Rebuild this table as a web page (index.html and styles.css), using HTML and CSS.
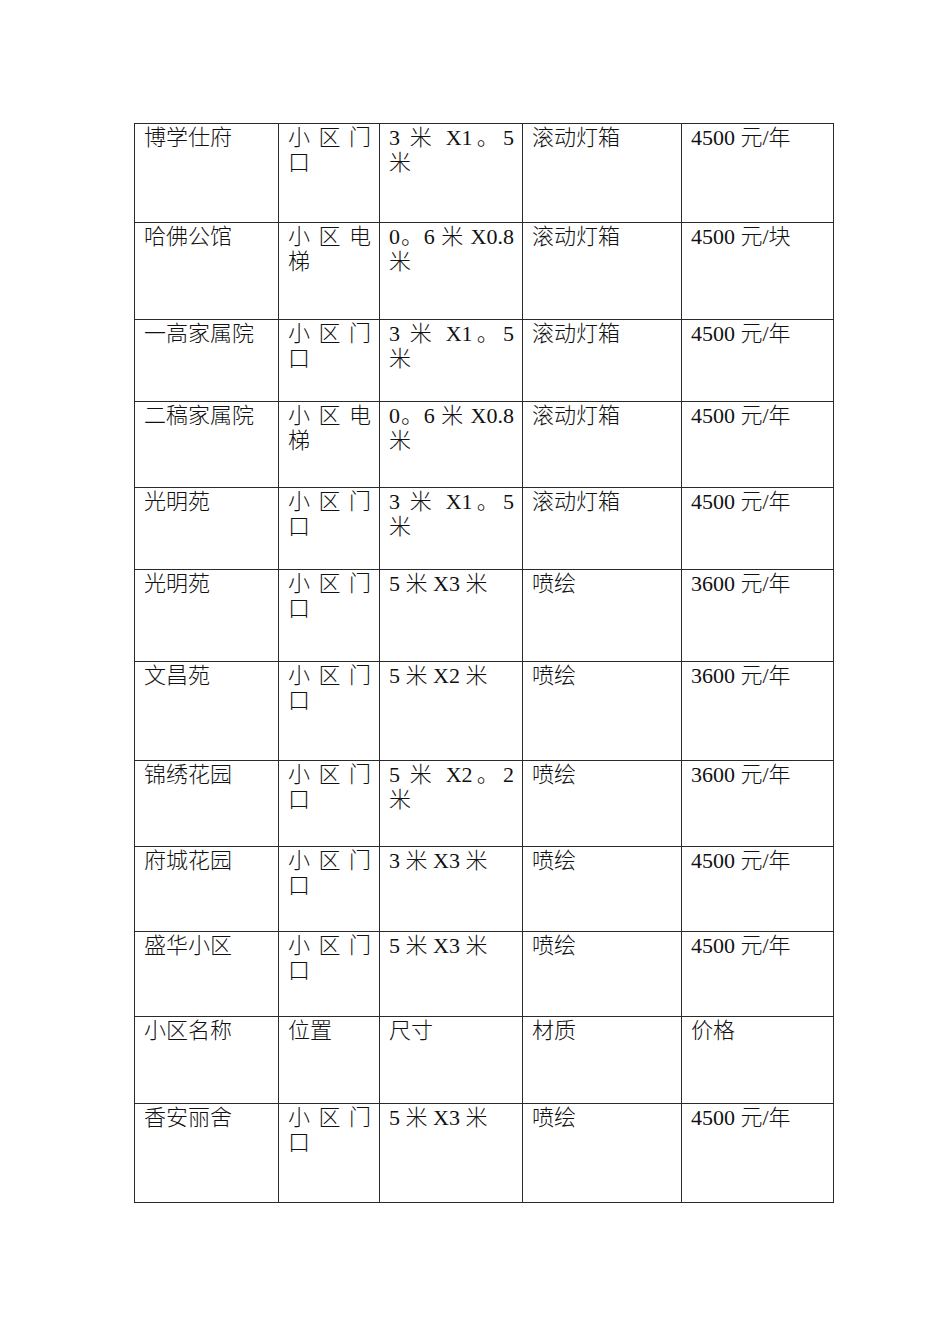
FILE: index.html
```html
<!DOCTYPE html>
<html lang="zh-CN">
<head>
<meta charset="utf-8">
<title>小区广告位</title>
<link rel="stylesheet" href="styles.css">
</head>
<body>
<table class="price-table">
  <colgroup>
    <col class="c-name">
    <col class="c-pos">
    <col class="c-size">
    <col class="c-mat">
    <col class="c-price">
  </colgroup>
  <tbody>
    <tr><td>博学仕府</td><td>小区门口</td><td>3 米 X1。5 米</td><td>滚动灯箱</td><td>4500 元/年</td></tr>
    <tr><td>哈佛公馆</td><td>小区电梯</td><td>0。6 米 X0.8 米</td><td>滚动灯箱</td><td>4500 元/块</td></tr>
    <tr><td>一高家属院</td><td>小区门口</td><td>3 米 X1。5 米</td><td>滚动灯箱</td><td>4500 元/年</td></tr>
    <tr><td>二稿家属院</td><td>小区电梯</td><td>0。6 米 X0.8 米</td><td>滚动灯箱</td><td>4500 元/年</td></tr>
    <tr><td>光明苑</td><td>小区门口</td><td>3 米 X1。5 米</td><td>滚动灯箱</td><td>4500 元/年</td></tr>
    <tr><td>光明苑</td><td>小区门口</td><td>5 米 X3 米</td><td>喷绘</td><td>3600 元/年</td></tr>
    <tr><td>文昌苑</td><td>小区门口</td><td>5 米 X2 米</td><td>喷绘</td><td>3600 元/年</td></tr>
    <tr><td>锦绣花园</td><td>小区门口</td><td>5 米 X2。2 米</td><td>喷绘</td><td>3600 元/年</td></tr>
    <tr><td>府城花园</td><td>小区门口</td><td>3 米 X3 米</td><td>喷绘</td><td>4500 元/年</td></tr>
    <tr><td>盛华小区</td><td>小区门口</td><td>5 米 X3 米</td><td>喷绘</td><td>4500 元/年</td></tr>
    <tr><td>小区名称</td><td>位置</td><td>尺寸</td><td>材质</td><td>价格</td></tr>
    <tr><td>香安丽舍</td><td>小区门口</td><td>5 米 X3 米</td><td>喷绘</td><td>4500 元/年</td></tr>
  </tbody>
</table>
</body>
</html>
```

FILE: styles.css
```css
html, body {
  margin: 0;
  padding: 0;
  background: #ffffff;
}

body {
  font-family: "Liberation Serif", "Noto Sans CJK SC", serif;
  font-size: 22px;
  font-weight: 300;
  line-height: 25px;
  color: #111111;
}

.price-table {
  margin: 123px 0 0 134px;
  width: 699px;
  table-layout: fixed;
  border-collapse: collapse;
}

.c-name { width: 144px; }
.c-pos { width: 101px; }
.c-size { width: 143px; }
.c-mat { width: 159px; }
.c-price { width: 152px; }

.price-table td {
  border: 1px solid #2a2a2a;
  vertical-align: top;
  text-align: justify;
  padding: 1px 8px 0 9px;
  word-break: normal;
}

.price-table tr:nth-child(1) { height: 99px; }
.price-table tr:nth-child(2) { height: 97px; }
.price-table tr:nth-child(3) { height: 82px; }
.price-table tr:nth-child(4) { height: 86px; }
.price-table tr:nth-child(5) { height: 82px; }
.price-table tr:nth-child(6) { height: 92px; }
.price-table tr:nth-child(7) { height: 99px; }
.price-table tr:nth-child(8) { height: 86px; }
.price-table tr:nth-child(9) { height: 85px; }
.price-table tr:nth-child(10) { height: 85px; }
.price-table tr:nth-child(11) { height: 87px; }
.price-table tr:nth-child(12) { height: 99px; }
```
